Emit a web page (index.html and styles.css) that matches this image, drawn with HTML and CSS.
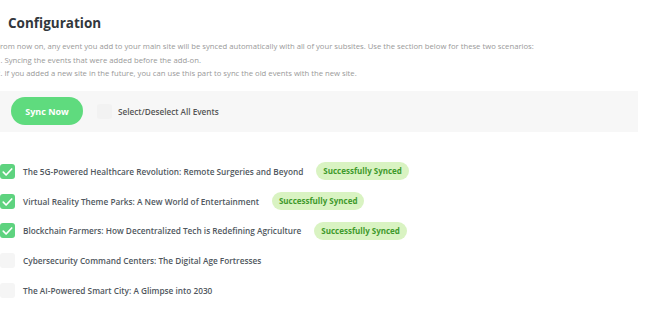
FILE: index.html
```html
<!DOCTYPE html>
<html lang="en">
<head>
    <meta charset="UTF-8">
    <title>Configuration</title>
    <link rel="stylesheet" href="styles.css">
</head>
<body>

    <div class="wrap">
        <h2 class="title">Configuration</h2>
        <div class="desc">
            <p>From now on, any event you add to your main site will be synced automatically with all of your subsites. Use the section below for these two scenarios:</p>
            <p>1. Syncing the events that were added before the add-on.</p>
            <p>2. If you added a new site in the future, you can use this part to sync the old events with the new site.</p>
        </div>

        <div class="toolbar">
            <button class="sync-btn">Sync Now</button>
            <label class="select-all">
                <span class="box"></span>
                Select/Deselect All Events
            </label>
        </div>

        <ul class="events">
            <li class="event">
                <span class="box checked"><svg viewBox="0 0 16 16" width="16" height="16"><path d="M3.5 8.2l3 3 6-6.4" fill="none" stroke="#fff" stroke-width="1.8" stroke-linecap="round" stroke-linejoin="round"/></svg></span>
                <span class="name">The 5G-Powered Healthcare Revolution: Remote Surgeries and Beyond</span>
                <span class="badge">Successfully Synced</span>
            </li>
            <li class="event">
                <span class="box checked"><svg viewBox="0 0 16 16" width="16" height="16"><path d="M3.5 8.2l3 3 6-6.4" fill="none" stroke="#fff" stroke-width="1.8" stroke-linecap="round" stroke-linejoin="round"/></svg></span>
                <span class="name">Virtual Reality Theme Parks: A New World of Entertainment</span>
                <span class="badge">Successfully Synced</span>
            </li>
            <li class="event">
                <span class="box checked"><svg viewBox="0 0 16 16" width="16" height="16"><path d="M3.5 8.2l3 3 6-6.4" fill="none" stroke="#fff" stroke-width="1.8" stroke-linecap="round" stroke-linejoin="round"/></svg></span>
                <span class="name">Blockchain Farmers: How Decentralized Tech is Redefining Agriculture</span>
                <span class="badge">Successfully Synced</span>
            </li>
            <li class="event">
                <span class="box"></span>
                <span class="name">Cybersecurity Command Centers: The Digital Age Fortresses</span>
            </li>
            <li class="event">
                <span class="box"></span>
                <span class="name">The AI-Powered Smart City: A Glimpse into 2030</span>
            </li>
        </ul>
    </div>

</body>
</html>
```

FILE: styles.css
```css
* {
    margin: 0;
    padding: 0;
    box-sizing: border-box;
    font-family: 'Open Sans', sans-serif;
}
body {
    background: #fff;
    color: #444;
}
.wrap {
    width: 642px;
    margin-left: -4px;
}
.title {
    font-size: 13.5px;
    font-weight: 700;
    color: #32373c;
    padding: 13px 0 0 12px;
    line-height: 20px;
}
.desc {
    margin-top: 7px;
    font-size: 7.7px;
    line-height: 13.5px;
    color: #999;
    white-space: nowrap;
}
.toolbar {
    margin-top: 10px;
    background: #f7f7f7;
    height: 41px;
    display: flex;
    align-items: center;
    padding-left: 15px;
}
.sync-btn {
    background: #5fdb7e;
    color: #fff;
    border: none;
    border-radius: 14px;
    width: 72px;
    height: 28px;
    font-size: 9px;
    font-weight: 700;
}
.select-all {
    display: flex;
    align-items: center;
    margin-left: 14px;
    font-size: 8.2px;
    font-weight: 600;
    color: #555;
}
.select-all .box {
    background: #f2f2f2;
    margin-right: 6px;
}
.box {
    width: 15px;
    height: 15px;
    border-radius: 3px;
    background: #f5f5f5;
    display: inline-flex;
    flex-shrink: 0;
}
.box.checked {
    background: #5ed37f;
}
.events {
    list-style: none;
    margin-top: 25px;
}
.event {
    display: flex;
    align-items: center;
    height: 29.8px;
    padding-left: 4px;
}
.event .box {
    margin-right: 8px;
}
.name {
    font-size: 8.25px;
    font-weight: 600;
    color: #50575e;
}
.badge {
    margin-left: 13px;
    background: #d9f3c2;
    color: #3f9a2c;
    font-size: 8px;
    font-weight: 700;
    padding: 0 7px;
    height: 18px;
    line-height: 18px;
    border-radius: 9px;
}
```
